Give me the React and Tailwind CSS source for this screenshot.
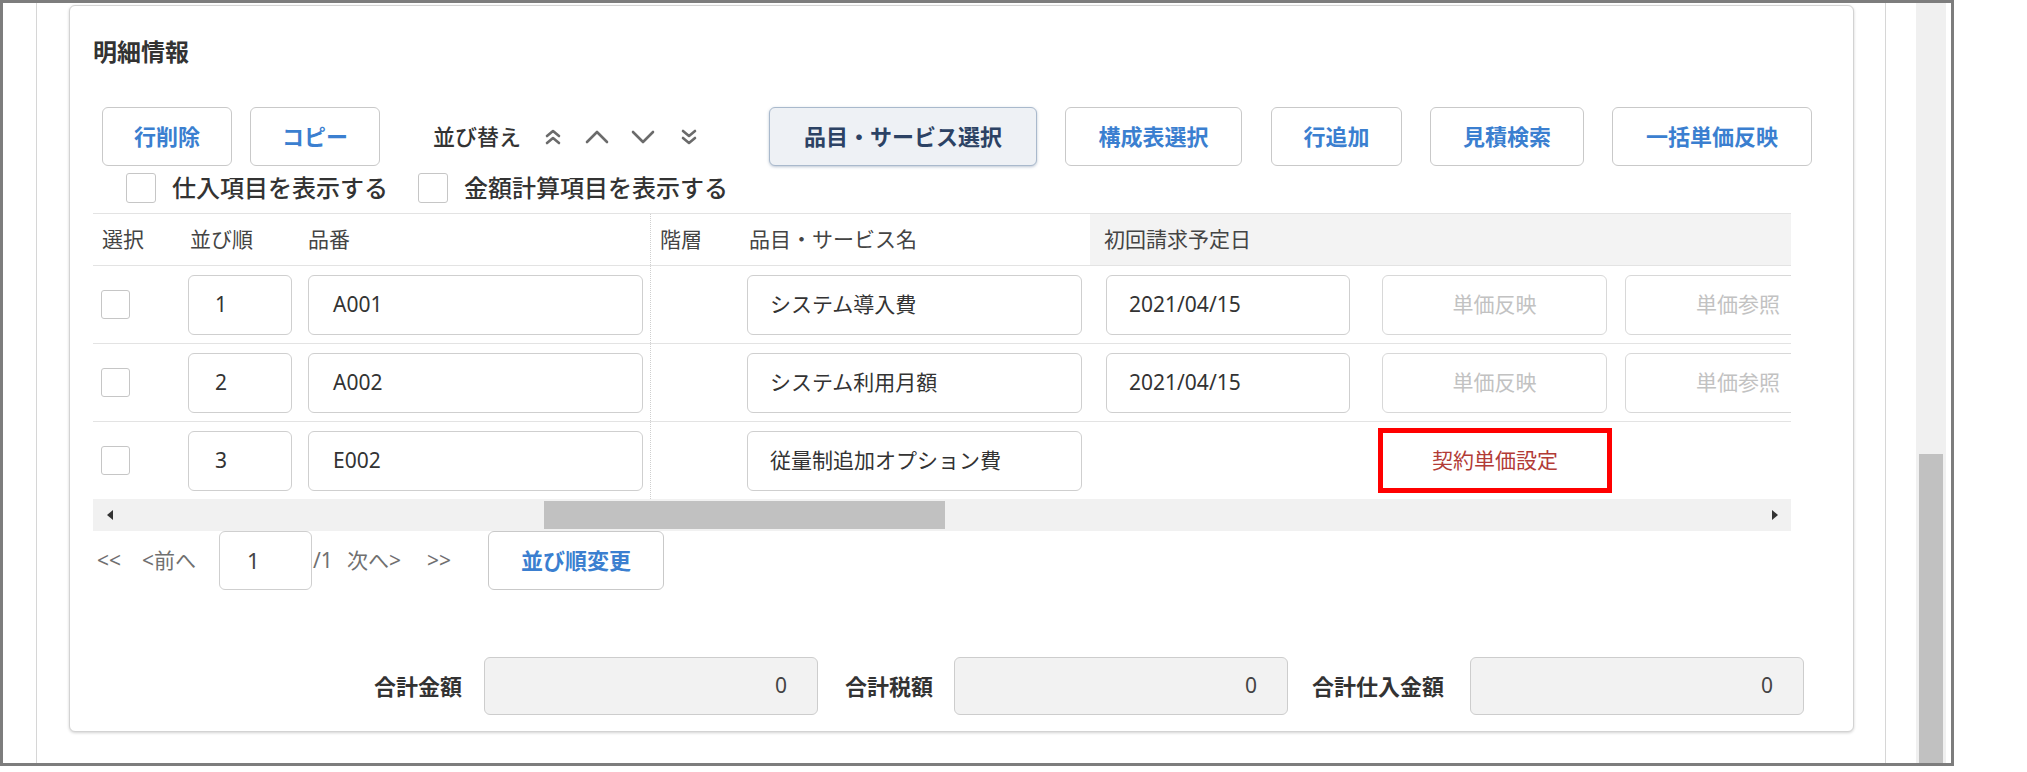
import React from "react";

const FONT = { fontFamily: '"Noto Sans", "Noto Sans CJK JP", sans-serif' };

function Btn({ children, className = "" }) {
  return (
    <button
      className={`h-[59px] shrink-0 rounded-[6px] border border-[#c9c9c9] bg-white text-[22px] font-bold text-[#3b7fd0] ${className}`}
    >
      {children}
    </button>
  );
}

function Box({ className = "" }) {
  return <span className={`block shrink-0 rounded-[3px] border border-[#c6c6c6] bg-white ${className}`} />;
}

function Field({ value, className = "" }) {
  return (
    <div
      className={`flex h-[60px] shrink-0 items-center rounded-[6px] border border-[#cfcfcf] bg-white text-[21px] text-[#333] ${className}`}
    >
      {value}
    </div>
  );
}

function Chevron({ d, w = 24, h = 14 }) {
  return (
    <svg width={w} height={h} viewBox={`0 0 ${w} ${h}`} className="shrink-0">
      <path d={d} fill="none" stroke="#6b6b6b" strokeWidth="2.6" strokeLinecap="round" strokeLinejoin="round" />
    </svg>
  );
}

function Row({ no, code, name, date, contract }) {
  return (
    <div className="flex h-[78px] items-center border-t border-[#e3e3e3]">
      <Box className="ml-[8px] h-[29px] w-[29px]" />
      <Field value={no} className="ml-[58px] w-[104px] pl-[26px]" />
      <Field value={code} className="ml-[16px] w-[335px] pl-[24px]" />
      <div className="ml-[7px] h-full border-l border-dotted border-[#cfcfcf]" />
      <Field value={name} className="ml-[96px] w-[335px] pl-[22px]" />
      {contract ? (
        <>
          <div className="ml-[24px] w-[244px] shrink-0" />
          <div className="ml-[28px] flex h-[65px] w-[234px] shrink-0 items-center justify-center border-[5px] border-[#ff0000] text-[21px] text-[#b23b36]">
            契約単価設定
          </div>
        </>
      ) : (
        <>
          <Field value={date} className="ml-[24px] w-[244px] pl-[22px]" />
          <div className="ml-[32px] flex h-[60px] w-[225px] shrink-0 items-center justify-center rounded-[6px] border border-[#d8d8d8] text-[21px] text-[#c2c2c2]">
            単価反映
          </div>
          <div className="ml-[18px] flex h-[60px] w-[226px] shrink-0 items-center justify-center rounded-[6px] border border-[#d8d8d8] text-[21px] text-[#c2c2c2]">
            単価参照
          </div>
        </>
      )}
    </div>
  );
}

function Total({ label, labelW, className = "" }) {
  return (
    <div className={`flex items-center ${className}`}>
      <span className={`shrink-0 whitespace-nowrap text-[22px] font-bold text-[#333] ${labelW}`}>{label}</span>
      <div className="ml-[9px] flex h-[58px] w-[334px] shrink-0 items-center justify-end rounded-[6px] border border-[#cdcdcd] bg-[#f2f2f2] pr-[30px] text-[21px] text-[#444]">
        0
      </div>
    </div>
  );
}

export default function App() {
  const rows = [
    { no: "1", code: "A001", name: "システム導入費", date: "2021/04/15" },
    { no: "2", code: "A002", name: "システム利用月額", date: "2021/04/15" },
    { no: "3", code: "E002", name: "従量制追加オプション費", contract: true },
  ];

  return (
    <div className="h-[772px] w-[2027px] bg-white" style={FONT}>
      <div className="flex h-[766px] w-[1954px] border-[3px] border-[#7d7d7d]">
        <div className="h-full w-[34px] shrink-0 border-r border-[#d6d6d6]" />

        {/* card */}
        <div className="ml-[32px] mt-[2px] flex h-[727px] w-[1785px] shrink-0 flex-col rounded-[6px] border border-[#d3d3d3] bg-white pl-[23px] shadow-[0_1px_3px_rgba(0,0,0,0.18)]">
          <div className="mt-[31px] text-[24px] leading-[30px] font-semibold text-[#333]">明細情報</div>

          <div className="mt-[40px] flex items-center">
            <Btn className="ml-[9px] w-[130px]">行削除</Btn>
            <Btn className="ml-[18px] w-[130px]">コピー</Btn>
            <span className="ml-[53px] w-[85px] shrink-0 whitespace-nowrap text-[22px] font-medium text-[#333]">並び替え</span>
            <span className="ml-[25px]">
              <Chevron w={20} h={22} d="M4 10 L10 5 L16 10 M4 17 L10 12 L16 17" />
            </span>
            <span className="ml-[22px]">
              <Chevron d="M2 12 L12 2 L22 12" />
            </span>
            <span className="ml-[22px]">
              <Chevron d="M2 2 L12 12 L22 2" />
            </span>
            <span className="ml-[24px]">
              <Chevron w={20} h={22} d="M4 5 L10 10 L16 5 M4 12 L10 17 L16 12" />
            </span>
            <button className="ml-[70px] h-[59px] w-[268px] shrink-0 rounded-[6px] border border-[#a9b9cc] bg-[#eef1f5] text-[22px] font-bold text-[#2c4264] shadow-[0_1px_3px_rgba(60,90,130,0.35)]">
              品目・サービス選択
            </button>
            <Btn className="ml-[28px] w-[177px]">構成表選択</Btn>
            <Btn className="ml-[29px] w-[131px]">行追加</Btn>
            <Btn className="ml-[28px] w-[154px]">見積検索</Btn>
            <Btn className="ml-[28px] w-[200px]">一括単価反映</Btn>
          </div>

          <div className="mt-[4px] flex h-[36px] items-center">
            <Box className="ml-[33px] h-[30px] w-[30px]" />
            <span className="ml-[16px] w-[230px] shrink-0 whitespace-nowrap text-[24px] font-medium text-[#333]">仕入項目を表示する</span>
            <Box className="ml-[16px] h-[30px] w-[30px]" />
            <span className="ml-[16px] whitespace-nowrap text-[24px] font-medium text-[#333]">金額計算項目を表示する</span>
          </div>

          {/* table */}
          <div className="mt-[7px] w-[1698px] overflow-hidden">
            <div className="flex h-[52px] items-stretch border-t border-[#e3e3e3] text-[21px] text-[#444]">
              <div className="flex w-[95px] shrink-0 items-center pl-[9px]">選択</div>
              <div className="flex w-[118px] shrink-0 items-center pl-[2px]">並び順</div>
              <div className="flex w-[344px] shrink-0 items-center pl-[2px]">品番</div>
              <div className="flex w-[97px] shrink-0 items-center border-l border-dotted border-[#cfcfcf] pl-[9px]">階層</div>
              <div className="flex w-[343px] shrink-0 items-center pl-[2px]">品目・サービス名</div>
              <div className="flex flex-1 items-center bg-[#f3f3f3] pl-[14px]">初回請求予定日</div>
            </div>
            {rows.map((r) => (
              <Row key={r.no} {...r} />
            ))}
            <div className="flex h-[32px] items-center bg-[#f1f1f1]">
              <span className="ml-[14px] h-0 w-0 border-y-[5px] border-r-[6px] border-y-transparent border-r-[#333]" />
              <div className="ml-[431px] h-[28px] w-[401px] bg-[#c1c1c1]" />
              <span className="ml-auto mr-[13px] h-0 w-0 border-y-[5px] border-l-[6px] border-y-transparent border-l-[#333]" />
            </div>
          </div>

          {/* pager */}
          <div className="flex h-[59px] items-center text-[21px] text-[#707070]">
            <span className="ml-[4px] w-[28px] shrink-0 whitespace-nowrap">&lt;&lt;</span>
            <span className="ml-[17px] w-[63px] shrink-0 whitespace-nowrap">&lt;前へ</span>
            <div className="ml-[14px] flex h-[59px] w-[93px] shrink-0 items-center rounded-[6px] border border-[#cfcfcf] pl-[27px] text-[22px] text-[#444]">
              1
            </div>
            <span className="ml-[1px] w-[22px] shrink-0 whitespace-nowrap">/1</span>
            <span className="ml-[12px] w-[66px] shrink-0 whitespace-nowrap">次へ&gt;</span>
            <span className="ml-[14px] w-[28px] shrink-0 whitespace-nowrap">&gt;&gt;</span>
            <Btn className="ml-[33px] w-[176px]">並び順変更</Btn>
          </div>

          {/* totals */}
          <div className="mt-[67px] flex items-center">
            <Total label="合計金額" labelW="ml-[281px] w-[101px]" />
            <Total label="合計税額" labelW="w-[100px]" className="ml-[27px]" />
            <Total label="合計仕入金額" labelW="w-[149px]" className="ml-[24px]" />
          </div>
        </div>

        <div className="ml-[31px] h-full w-px shrink-0 bg-[#d6d6d6]" />
        <div className="ml-[30px] flex h-full w-[30px] shrink-0 flex-col bg-[#f0f0f0]">
          <div className="ml-[3px] mt-[451px] w-[24px] flex-1 bg-[#c1c1c1]" />
        </div>
      </div>
    </div>
  );
}
